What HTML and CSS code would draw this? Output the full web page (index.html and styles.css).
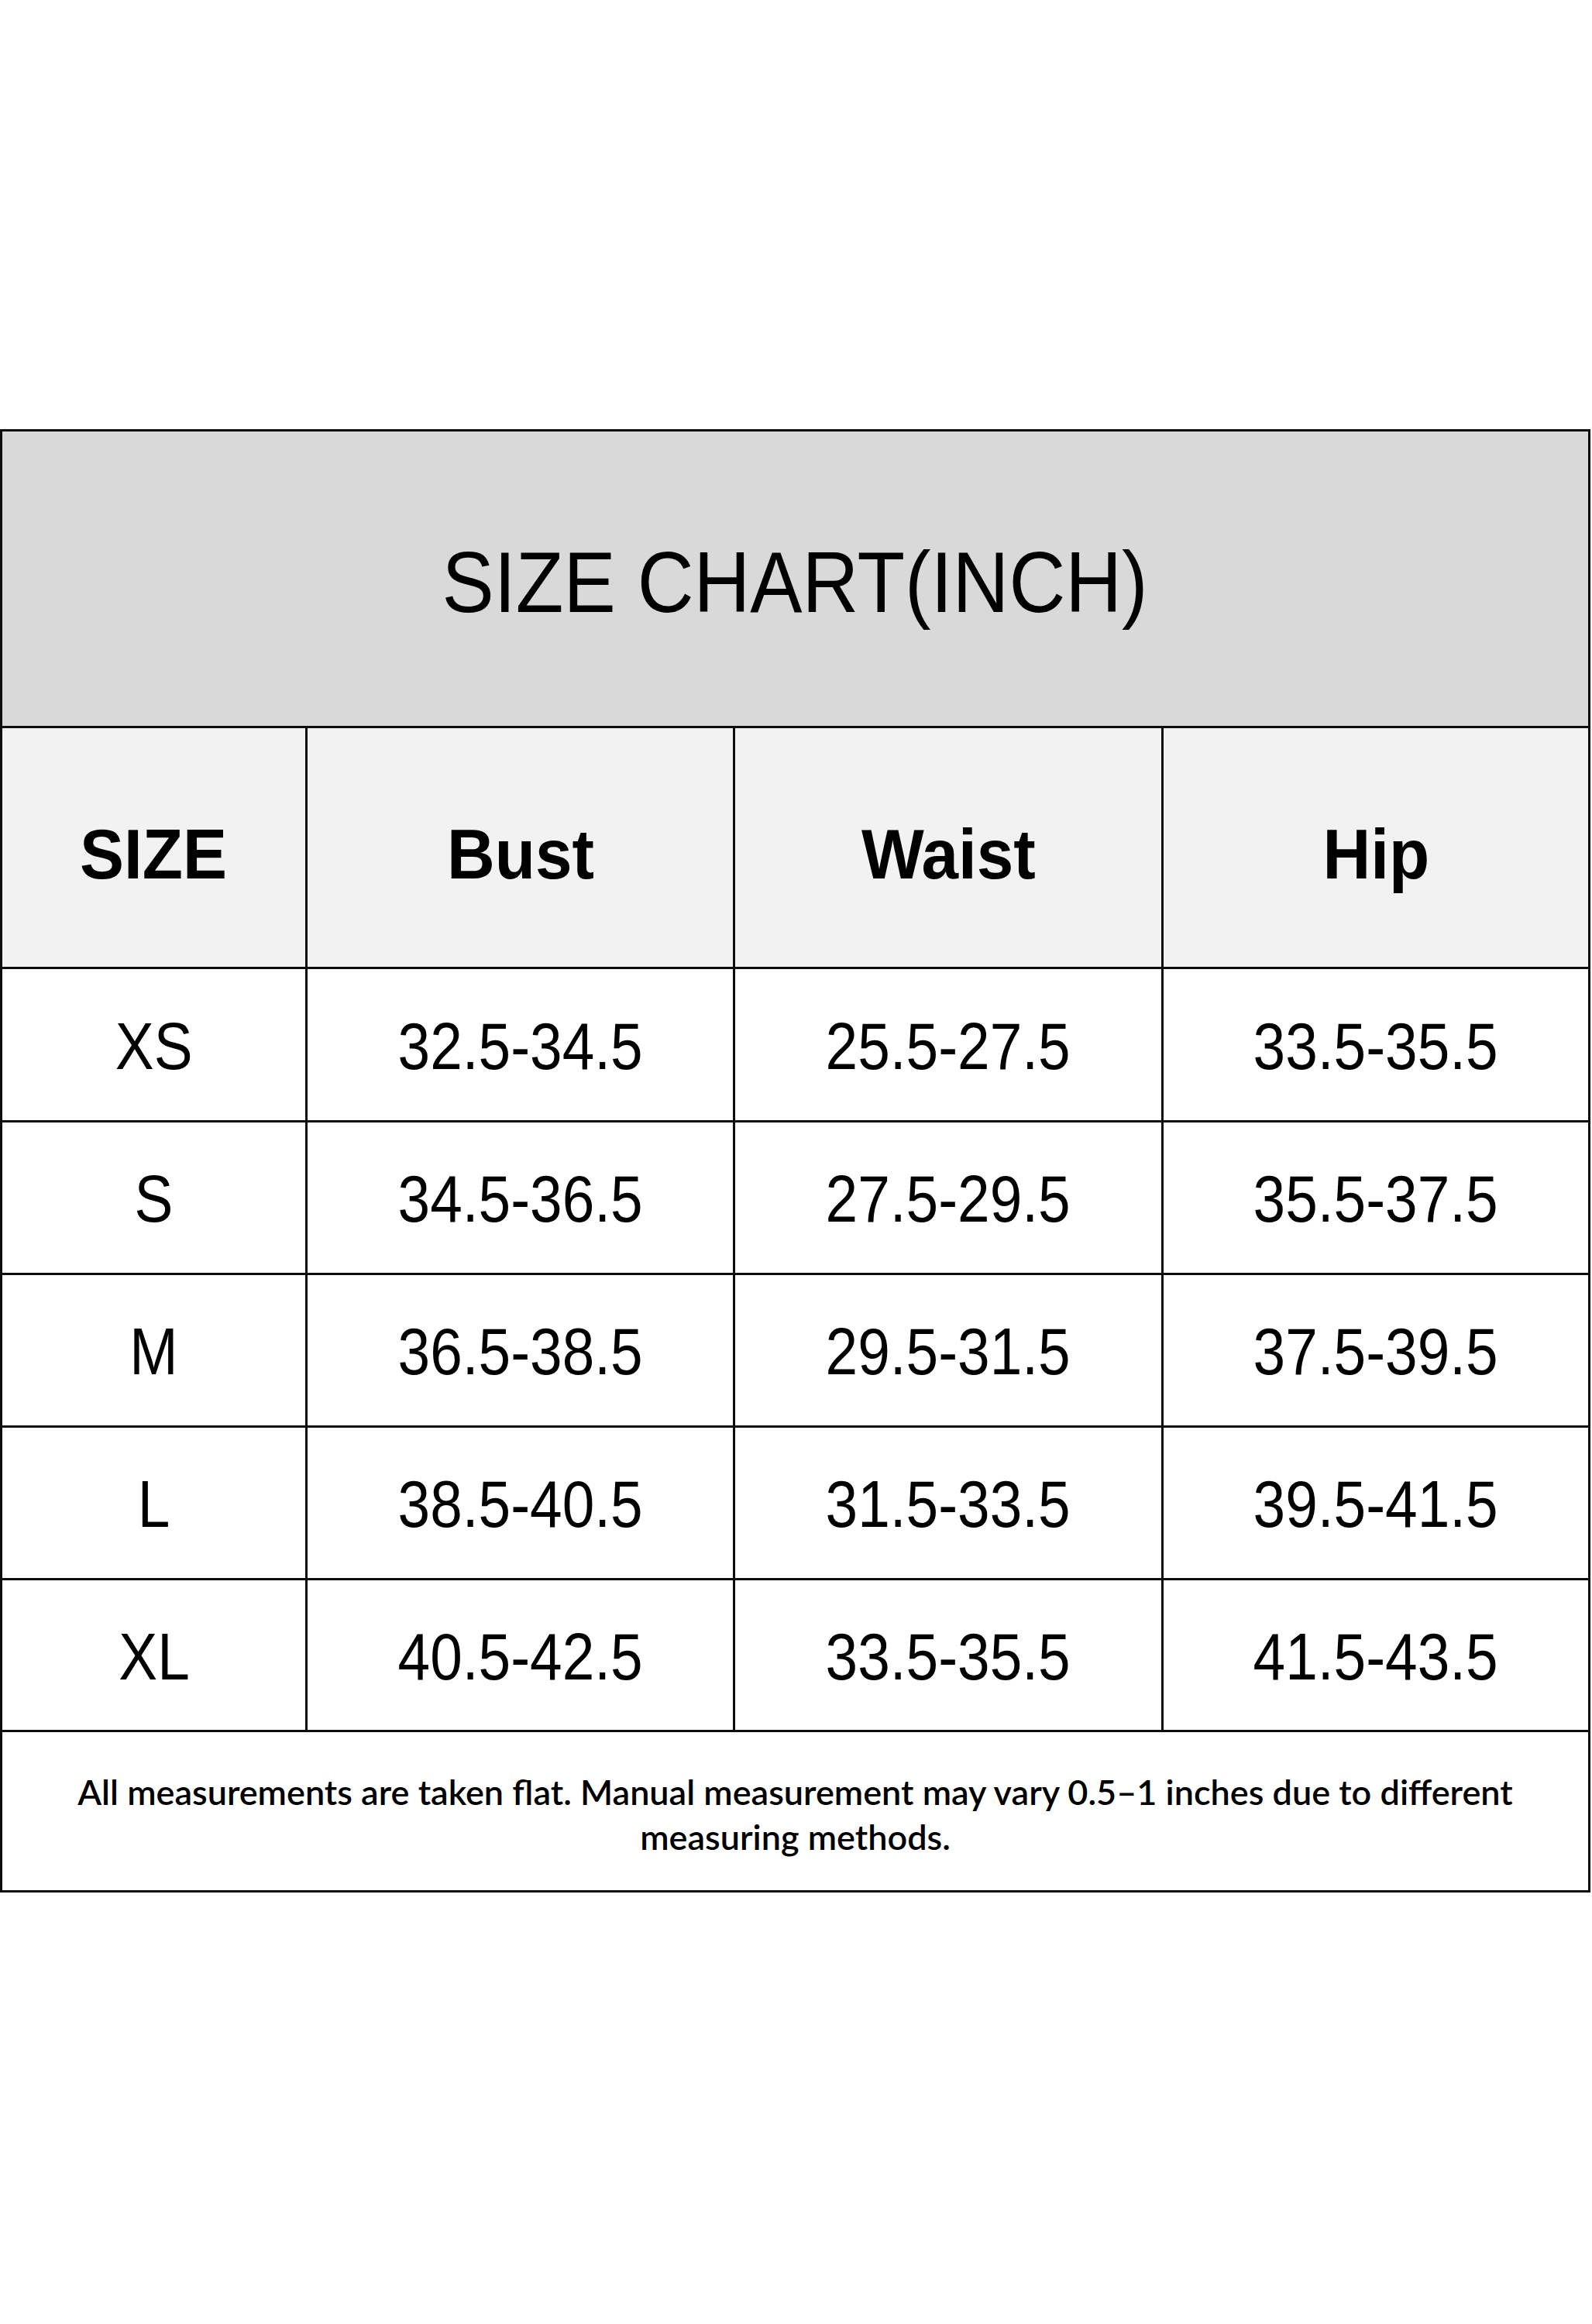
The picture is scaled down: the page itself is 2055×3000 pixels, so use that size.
FILE: index.html
```html
<!DOCTYPE html>
<html lang="en">
<head>
<meta charset="utf-8">
<title>Size Chart (Inch)</title>
<link rel="stylesheet" href="styles.css">
</head>
<body>
<main class="page">
  <section class="chart">
    <div class="cell title"><span class="narrow">SIZE CHART(INCH)</span></div>

    <div class="cell head"><span class="hnarrow">SIZE</span></div>
    <div class="cell head"><span class="hnarrow">Bust</span></div>
    <div class="cell head"><span class="hnarrow">Waist</span></div>
    <div class="cell head"><span class="hnarrow">Hip</span></div>

    <div class="cell data"><span class="dnarrow">XS</span></div>
    <div class="cell data"><span class="dnarrow">32.5-34.5</span></div>
    <div class="cell data"><span class="dnarrow">25.5-27.5</span></div>
    <div class="cell data"><span class="dnarrow">33.5-35.5</span></div>

    <div class="cell data"><span class="dnarrow">S</span></div>
    <div class="cell data"><span class="dnarrow">34.5-36.5</span></div>
    <div class="cell data"><span class="dnarrow">27.5-29.5</span></div>
    <div class="cell data"><span class="dnarrow">35.5-37.5</span></div>

    <div class="cell data"><span class="dnarrow">M</span></div>
    <div class="cell data"><span class="dnarrow">36.5-38.5</span></div>
    <div class="cell data"><span class="dnarrow">29.5-31.5</span></div>
    <div class="cell data"><span class="dnarrow">37.5-39.5</span></div>

    <div class="cell data"><span class="dnarrow">L</span></div>
    <div class="cell data"><span class="dnarrow">38.5-40.5</span></div>
    <div class="cell data"><span class="dnarrow">31.5-33.5</span></div>
    <div class="cell data"><span class="dnarrow">39.5-41.5</span></div>

    <div class="cell data"><span class="dnarrow">XL</span></div>
    <div class="cell data"><span class="dnarrow">40.5-42.5</span></div>
    <div class="cell data"><span class="dnarrow">33.5-35.5</span></div>
    <div class="cell data"><span class="dnarrow">41.5-43.5</span></div>

    <div class="cell note"><p>All measurements are taken flat. Manual measurement may vary 0.5–1 inches due to different measuring methods.</p></div>
  </section>
</main>
</body>
</html>
```

FILE: styles.css
```css
html, body {
  margin: 0;
  padding: 0;
  background: #ffffff;
}

.page {
  width: 2055px;
  height: 3000px;
  padding-top: 554px;
  box-sizing: border-box;
}

.chart {
  display: grid;
  grid-template-columns: 391px 549px 550px 548px;
  grid-template-rows: 380px 308px 195px 194px 194px 194px 193px 204px;
  gap: 3px;
  padding: 3px;
  background: #0d0d0d;
  width: max-content;
}

.cell {
  display: flex;
  align-items: center;
  justify-content: center;
  background: #ffffff;
  color: #000000;
  font-family: "Liberation Sans", Arial, sans-serif;
  overflow: hidden;
}

.title {
  grid-column: 1 / -1;
  background: #d9d9d9;
  font-size: 112px;
  padding-top: 8px;
}

.head {
  background: #f2f2f2;
  font-weight: 700;
  font-size: 90px;
  padding-top: 18px;
}

.data {
  font-size: 85px;
  padding-top: 4px;
}

.narrow,
.hnarrow,
.dnarrow {
  display: inline-block;
  white-space: nowrap;
}

.narrow {
  transform: scaleX(0.9);
}

.hnarrow {
  transform: scaleX(0.95);
}

.dnarrow {
  transform: scaleX(0.88);
}

.note {
  grid-column: 1 / -1;
  font-family: Lato, "Open Sans", sans-serif;
  font-weight: 600;
  font-size: 45px;
  line-height: 58px;
  padding: 8px 80px 0;
  text-align: center;
}

.note p {
  margin: 0;
}
```
